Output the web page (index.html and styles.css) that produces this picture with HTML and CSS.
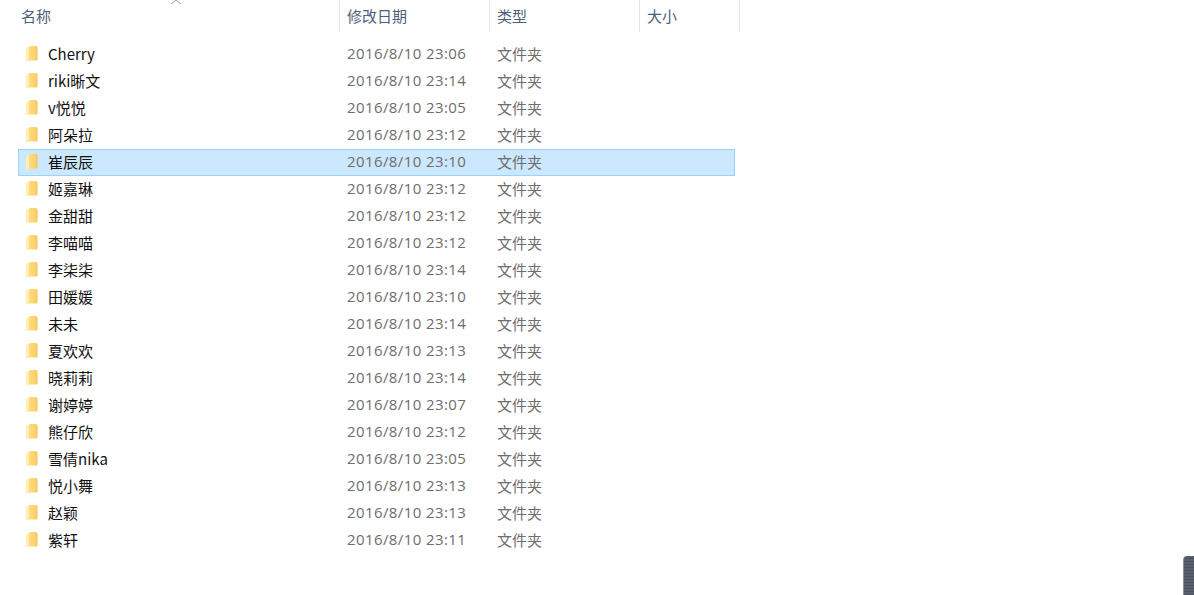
FILE: index.html
```html
<!DOCTYPE html>
<html lang="zh-CN">
<head>
<meta charset="utf-8">
<title>文件夹</title>
<link rel="stylesheet" href="styles.css">
</head>
<body>
<svg class="defs" width="0" height="0" aria-hidden="true">
  <defs>
    <linearGradient id="fg" x1="0" x2="1" y1="0" y2="0">
      <stop offset="0" stop-color="#fff0b8"/>
      <stop offset="0.35" stop-color="#ffd978"/>
      <stop offset="0.75" stop-color="#fcd36f"/>
      <stop offset="1" stop-color="#f3c257"/>
    </linearGradient>
    <symbol id="folder" viewBox="0 0 14 17">
      <path d="M1 3.5 L5 1 H11 Q12.5 1 12.5 2.5 V14.5 Q12.5 15.5 11.5 15.5 H4 L1 16.5 Z" fill="url(#fg)"/>
      <path d="M1 3.5 L4 2 V14 L1 16.5 Z" fill="#ffefb5"/>
    </symbol>
  </defs>
</svg>
<main class="explorer">
  <header class="head">
    <div class="hcell name">名称<svg class="sort" width="12" height="6" viewBox="0 0 12 6"><path d="M1 5 L6 1 L11 5" fill="none" stroke="#9aa0a6" stroke-width="1"/></svg></div>
    <div class="hcell date">修改日期</div>
    <div class="hcell type">类型</div>
    <div class="hcell size">大小</div>
  </header>
  <ul class="list">
    <li class="row"><svg class="ico"><use href="#folder"/></svg><span class="n">Cherry</span><span class="d">2016/8/10 23:06</span><span class="t">文件夹</span></li>
    <li class="row"><svg class="ico"><use href="#folder"/></svg><span class="n">riki晰文</span><span class="d">2016/8/10 23:14</span><span class="t">文件夹</span></li>
    <li class="row"><svg class="ico"><use href="#folder"/></svg><span class="n">v悦悦</span><span class="d">2016/8/10 23:05</span><span class="t">文件夹</span></li>
    <li class="row"><svg class="ico"><use href="#folder"/></svg><span class="n">阿朵拉</span><span class="d">2016/8/10 23:12</span><span class="t">文件夹</span></li>
    <li class="row selected"><svg class="ico"><use href="#folder"/></svg><span class="n">崔辰辰</span><span class="d">2016/8/10 23:10</span><span class="t">文件夹</span></li>
    <li class="row"><svg class="ico"><use href="#folder"/></svg><span class="n">姬嘉琳</span><span class="d">2016/8/10 23:12</span><span class="t">文件夹</span></li>
    <li class="row"><svg class="ico"><use href="#folder"/></svg><span class="n">金甜甜</span><span class="d">2016/8/10 23:12</span><span class="t">文件夹</span></li>
    <li class="row"><svg class="ico"><use href="#folder"/></svg><span class="n">李喵喵</span><span class="d">2016/8/10 23:12</span><span class="t">文件夹</span></li>
    <li class="row"><svg class="ico"><use href="#folder"/></svg><span class="n">李柒柒</span><span class="d">2016/8/10 23:14</span><span class="t">文件夹</span></li>
    <li class="row"><svg class="ico"><use href="#folder"/></svg><span class="n">田媛媛</span><span class="d">2016/8/10 23:10</span><span class="t">文件夹</span></li>
    <li class="row"><svg class="ico"><use href="#folder"/></svg><span class="n">未未</span><span class="d">2016/8/10 23:14</span><span class="t">文件夹</span></li>
    <li class="row"><svg class="ico"><use href="#folder"/></svg><span class="n">夏欢欢</span><span class="d">2016/8/10 23:13</span><span class="t">文件夹</span></li>
    <li class="row"><svg class="ico"><use href="#folder"/></svg><span class="n">晓莉莉</span><span class="d">2016/8/10 23:14</span><span class="t">文件夹</span></li>
    <li class="row"><svg class="ico"><use href="#folder"/></svg><span class="n">谢婷婷</span><span class="d">2016/8/10 23:07</span><span class="t">文件夹</span></li>
    <li class="row"><svg class="ico"><use href="#folder"/></svg><span class="n">熊仔欣</span><span class="d">2016/8/10 23:12</span><span class="t">文件夹</span></li>
    <li class="row"><svg class="ico"><use href="#folder"/></svg><span class="n">雪倩nika</span><span class="d">2016/8/10 23:05</span><span class="t">文件夹</span></li>
    <li class="row"><svg class="ico"><use href="#folder"/></svg><span class="n">悦小舞</span><span class="d">2016/8/10 23:13</span><span class="t">文件夹</span></li>
    <li class="row"><svg class="ico"><use href="#folder"/></svg><span class="n">赵颖</span><span class="d">2016/8/10 23:13</span><span class="t">文件夹</span></li>
    <li class="row"><svg class="ico"><use href="#folder"/></svg><span class="n">紫轩</span><span class="d">2016/8/10 23:11</span><span class="t">文件夹</span></li>
  </ul>
</main>
<div class="scroll-thumb"></div>
</body>
</html>
```
FILE: styles.css
```css
* { box-sizing: border-box; }
html, body { margin: 0; padding: 0; height: 100%; overflow: hidden; background: #fff; }
body {
  font-family: "Noto Sans CJK SC", "Noto Sans", sans-serif;
  font-size: 15px;
  line-height: 27px;
  color: #111;
}
.defs { position: absolute; }
.head {
  display: flex;
  height: 32px;
  color: #4c607a;
}
.hcell {
  position: relative;
  padding: 2px 0 0 7px;
  border-right: 1px solid #e5e5e5;
}
.hcell.name { width: 340px; padding-left: 21px; }
.hcell.date { width: 150px; }
.hcell.type { width: 150px; }
.hcell.size { width: 100px; }
.sort { position: absolute; left: 170px; top: -1px; }
.list {
  list-style: none;
  margin: 9px 0 0 18px;
  padding: 0;
  width: 717px;
}
.row {
  display: flex;
  align-items: center;
  height: 27px;
  padding-bottom: 2px;
  border: 1px solid transparent;
}
.row.selected { background: #cce8ff; border-color: #99d1ff; }
.ico { width: 14px; height: 17px; margin: -1px 0 0 6px; flex: none; }
.n { width: 299px; margin-left: 9px; }
.d { width: 150px; color: #6d6d6d; font-family: "Open Sans", "Noto Sans CJK SC", sans-serif; letter-spacing: 0.4px; }
.t { color: #6d6d6d; }
.scroll-thumb {
  position: absolute;
  right: 0;
  bottom: 0;
  width: 11px;
  height: 39px;
  background: repeating-linear-gradient(180deg, #5a606c 0 2px, #4c525d 2px 3px);
  border-left: 1px solid #8d929b;
  border-radius: 4px 0 0 0;
}
```
